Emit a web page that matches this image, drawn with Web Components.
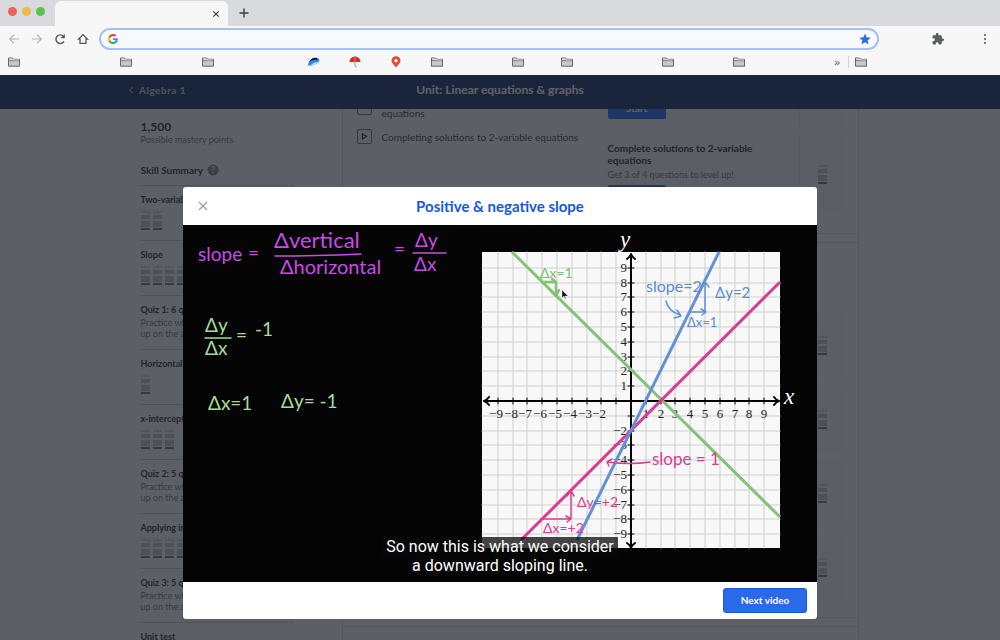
<!DOCTYPE html>
<html lang="en">
<head>
<meta charset="utf-8">
<title>Linear equations &amp; graphs</title>
<style>
html,body{margin:0;height:100%}
body{display:flex;flex-direction:column;overflow:hidden;font-family:Lato,"Noto Sans",sans-serif;color:#21242c;background:#f7f7f7}
</style>
</head>
<body>
<browser-chrome></browser-chrome>
<course-page>
  <course-sidebar slot="side"></course-sidebar>
  <lesson-list slot="main"></lesson-list>
  <video-dialog slot="dialog" heading="Positive &amp; negative slope">
    <slope-board></slope-board>
  </video-dialog>
</course-page>

<script>
const define=(name,html,setup)=>{
  const t=document.createElement('template');t.innerHTML=html;
  customElements.define(name,class extends HTMLElement{
    constructor(){super();this.attachShadow({mode:'open'}).append(t.content.cloneNode(true));}
    connectedCallback(){if(setup&&!this.ready){this.ready=true;setup(this,this.shadowRoot);}}
  });
};

/* ---------- browser window ---------- */
define('folder-icon',`<style>:host{display:block;width:12px;height:10px}svg{display:block}</style>
<svg width="12" height="10" viewBox="0 0 12 10"><path d="M.5 9.2V1h4l1 1.300h6v6.900z" fill="#c9c9c9" stroke="#666" stroke-width="1"/><path d="M1 3.700h10.500" stroke="#666" stroke-width=".8"/><path d="M1 2h3.500l.6.900H11" stroke="#fff" stroke-width=".6" fill="none"/></svg>`);

define('bookmark-link',`<style>:host{display:block;flex:0 1 var(--w,auto)}a{display:flex;align-items:center;height:12px;width:12px}</style><a href="#" aria-label="Bookmark"><slot><folder-icon></folder-icon></slot></a>`,
  (el)=>{el.style.setProperty('--w',el.getAttribute('span')+'px')});

define('browser-chrome',`<style>
:host{display:block;flex:none}
button{border:0;background:none;padding:0;display:flex;align-items:center;justify-content:center}
svg{display:block}
.tabs{display:flex;height:26px;background:#d9dade}
.lights{display:flex;gap:5px;padding:7px 9px 0 8px;box-sizing:border-box;width:55px;height:26px}
.lights i{width:9px;height:9px;border-radius:50%}
.tab{width:173px;margin-top:1px;border-radius:6px 6px 0 0;background:#f7f7f7;display:flex;justify-content:flex-end;align-items:center;padding-right:8px;box-sizing:border-box}
.new{margin-left:11px}
.bar{display:flex;align-items:center;height:26px;padding:0 12px 0 8px}
.nav{display:flex;gap:11px;margin-right:10px}
.nav button{width:12px;height:12px}
.addr{flex:1;display:flex;align-items:center;height:18px;border:2px solid #a3c1f5;border-radius:11px;background:#f8f9fa;padding:0 6px 0 7px}
.addr input{flex:1;min-width:0;border:0;background:none;outline:0;height:16px;font:11px "Liberation Sans",sans-serif}
.ext{margin:0 38px 0 53px}
.marks{display:flex;align-items:center;height:23px;padding:0 0 4px 8px;box-sizing:border-box}
.over{margin-left:auto;display:flex;align-items:center;width:166px;font:11px "Liberation Sans",sans-serif;color:#555;white-space:nowrap}
.over i{width:1px;height:12px;background:#d4d4d4;margin:0 6px 0 8px}
</style>
<div class="tabs"><div class="lights"><i style="background:#e8645a"></i><i style="background:#eeb94a"></i><i style="background:#5cc14e"></i></div>
<div class="tab"><button aria-label="Close tab"><svg width="8" height="8"><path d="M1.300 1.300l5.400 5.400M6.700 1.300L1.300 6.700" stroke="#3c4043" stroke-width="1.200"/></svg></button></div>
<button class="new" aria-label="New tab"><svg width="10" height="10"><path d="M5 .5v9M.5 5h9" stroke="#3c4043" stroke-width="1.400"/></svg></button></div>
<div class="bar"><div class="nav">
<button aria-label="Back"><svg width="12" height="12" fill="none" stroke="#b3b5b8" stroke-width="1.200"><path d="M11 6H2M6 1.700L1.700 6 6 10.300"/></svg></button>
<button aria-label="Forward"><svg width="12" height="12" fill="none" stroke="#b3b5b8" stroke-width="1.200"><path d="M1 6h9M6 1.700L10.300 6 6 10.300"/></svg></button>
<button aria-label="Reload"><svg width="12" height="12" fill="none" stroke="#55585c" stroke-width="1.400"><path d="M10 8.300A4.300 4.300 0 1 1 9.400 3.200"/><path d="M10.800.9v4.300H6.500z" fill="#55585c" stroke="none"/></svg></button>
<button aria-label="Home"><svg width="12" height="12" fill="none" stroke="#55585c" stroke-width="1.300"><path d="M1.500 6.200L6 1.600l4.500 4.600H9v4.200H3V6.200z"/></svg></button>
</div>
<div class="addr"><svg width="10" height="10" viewBox="0 0 48 48"><path fill="#EA4335" d="M24 9.500c3.500 0 6.700 1.200 9.200 3.600l6.900-6.900C35.900 2.400 30.500 0 24 0 14.600 0 6.500 5.400 2.600 13.200l8 6.200C12.400 13.700 17.700 9.500 24 9.500z"/><path fill="#4285F4" d="M47 24.600c0-1.600-.2-3.100-.4-4.600H24v9h12.900c-.6 3-2.200 5.500-4.700 7.200l7.700 6C44.400 38 47 31.800 47 24.600z"/><path fill="#FBBC05" d="M10.500 28.600a14.500 14.500 0 0 1 0-9.200l-8-6.200a24 24 0 0 0 0 21.600z"/><path fill="#34A853" d="M24 48c6.500 0 11.900-2.100 15.900-5.800l-7.700-6c-2.200 1.500-4.900 2.300-8.200 2.300-6.300 0-11.600-4.200-13.500-9.900l-8 6.200C6.500 42.600 14.600 48 24 48z"/></svg>
<input type="text" aria-label="Address"><svg width="12" height="12" viewBox="0 0 12 12"><path d="M6 .6l1.600 3.700 4 .4-3 2.700.9 4L6 9.300l-3.500 2.100.9-4-3-2.700 4-.4z" fill="#2f6fe0"/></svg></div>
<button class="ext" aria-label="Extensions"><svg width="12" height="12" viewBox="1 1 22 22"><path fill="#5a5d61" d="M20.500 11H19V7a2 2 0 0 0-2-2h-4V3.500a2.500 2.500 0 0 0-5 0V5H4a2 2 0 0 0-2 2v3.800h1.500a2.700 2.700 0 0 1 0 5.400H2V20a2 2 0 0 0 2 2h3.800v-1.500a2.700 2.700 0 0 1 5.400 0V22H17a2 2 0 0 0 2-2v-4h1.500a2.500 2.500 0 0 0 0-5z"/></svg></button>
<button aria-label="Menu"><svg width="6" height="12" fill="#5a5d61"><circle cx="3" cy="2" r="1.100"/><circle cx="3" cy="6" r="1.100"/><circle cx="3" cy="10" r="1.100"/></svg></button></div>
<div class="marks">
<bookmark-link span="112"></bookmark-link><bookmark-link span="82"></bookmark-link><bookmark-link span="106"></bookmark-link>
<bookmark-link span="41"><svg width="12" height="10"><path d="M0 8.500C0 4 4 1 8 1c3 0 4 1 3 3-1 3-6 5-11 4.500z" fill="#2f86ee"/><path d="M1 5C3 1 6 0 9 1L9.500 3C6 2.500 4 3 1 5z" fill="#0b1c33"/><path d="M3 8c2-2 4-3 7-3-2 2-4 3.500-7 3z" fill="#fff" opacity=".8"/></svg></bookmark-link>
<bookmark-link span="41"><svg width="12" height="12"><path d="M.5 6A5.500 5.500 0 0 1 11.500 6z" fill="#e02a22"/><path d="M6 0v9.500q0 2 1.700 1.500" stroke="#999" fill="none"/></svg></bookmark-link>
<bookmark-link span="41"><svg width="12" height="12"><path d="M6 11.500C3 8 1.500 6.500 1.500 4.700a4.500 4.500 0 0 1 9 0C10.500 6.500 9 8 6 11.500z" fill="#e04b3c"/><circle cx="6" cy="4.700" r="1.600" fill="#fff"/></svg></bookmark-link>
<bookmark-link span="81"></bookmark-link><bookmark-link span="49"></bookmark-link><bookmark-link span="101"></bookmark-link><bookmark-link span="71"></bookmark-link><bookmark-link span="12"></bookmark-link>
<div class="over"><span>»</span><i></i><bookmark-link span="12"></bookmark-link></div></div>`);

/* ---------- course page ---------- */
define('course-page',`<style>
:host{display:flex;flex-direction:column;flex:1;min-height:0;position:relative;overflow:hidden;background:#f7f8fa}
header{flex:none;display:grid;grid-template-columns:1fr auto 1fr;align-items:center;height:34px;background:#0a2a66;color:#fff;padding-bottom:4px;box-sizing:border-box}
header a{color:inherit;text-decoration:none;display:flex;align-items:center;gap:5px;padding-left:128px;font-size:10px;font-weight:700;letter-spacing:.5px;opacity:.75}
h1{margin:0;font-size:12px;line-height:16px}
.cols{flex:1;min-height:0;display:grid;grid-template-columns:231px minmax(0,516px);justify-content:center;width:100%;max-width:970px;overflow:hidden}
.back{position:absolute;inset:0;background:#21242c;opacity:.72}
</style>
<header><a href="#"><svg width="6" height="8" fill="none" stroke="currentColor"><path d="M5 1L1.500 4 5 7"/></svg>Algebra 1</a><h1>Unit: Linear equations &amp; graphs</h1></header>
<div class="cols"><slot name="side"></slot><slot name="main"></slot></div>
<div class="back"></div><slot name="dialog"></slot>`);

define('mastery-meter',`<style>:host{display:block;width:9px;height:20px}svg{display:block}</style>
<svg width="9" height="20"><path d="M0 3V0l2 2 2.500-2L7 2l2-2v3z" fill="#cfd1d4"/><path d="M0 5h9v4H0zM0 11h9v6H0z" fill="#bfc1c5"/><path d="M0 18h9v2H0z" fill="#6b6f78"/></svg>`);

define('skill-item',`<style>
:host{display:block;box-sizing:border-box;border-top:1px solid #c8cacf;padding-top:7px;height:55px}
:host([note]){height:54px}
h3{margin:0 0 4px;font-size:9px;line-height:13px;font-weight:700}
:host([note]) h3{margin:0 0 1px}
p{margin:0;font-size:9px;line-height:11px;color:#6d7078}
.m{display:flex;gap:3px}
</style><h3></h3><div class="m"></div><p></p>`,(el,r)=>{
  r.querySelector('h3').textContent=el.getAttribute('name');
  r.querySelector('.m').innerHTML='<mastery-meter></mastery-meter>'.repeat(+el.getAttribute('meters')||0);
  r.querySelector('p').textContent=el.getAttribute('note')||'';
});

define('course-sidebar',`<style>
:host{display:block;padding:10px 48px 0 29px;border-right:1px solid #d6d8da;overflow:hidden}
.pts{font-size:12px;line-height:16px;font-weight:700}
.cap{font-size:9px;line-height:10px;color:#6d7078;margin-bottom:17px}
h2{margin:0 0 7px;font-size:10px;line-height:16px;display:flex;align-items:center;gap:4px}
</style>
<div class="pts">1,500</div><div class="cap">Possible mastery points</div>
<h2>Skill Summary <svg width="12" height="12"><circle cx="6" cy="6" r="5.500" fill="#7d8087"/><text x="6" y="9" font-size="9" font-weight="700" text-anchor="middle" fill="#fff">?</text></svg></h2>
<skill-item name="Two-variable" meters="2"></skill-item>
<skill-item name="Slope" meters="4"></skill-item>
<skill-item name="Quiz 1: 6 questions" note="Practice what you’ve learned, and level up on the above skills"></skill-item>
<skill-item name="Horizontal" meters="1"></skill-item>
<skill-item name="x-intercepts" meters="3"></skill-item>
<skill-item name="Quiz 2: 5 questions" note="Practice what you’ve learned, and level up on the above skills"></skill-item>
<skill-item name="Applying intercepts" meters="4"></skill-item>
<skill-item name="Quiz 3: 5 questions" note="Practice what you’ve learned, and level up on the above skills"></skill-item>
<skill-item name="Unit test"></skill-item>`);

define('practice-card',`<style>
:host{display:grid;grid-template-columns:1fr 44px;box-sizing:border-box;height:var(--h,66px);margin-bottom:8px;background:#f1f2f4}
div{padding:7px 8px}
.m{border-left:1px solid #dfe1e4;padding:0 0 0 18px;display:flex;align-items:center}
:host([plain]) mastery-meter{display:none}
</style><div><slot></slot></div><div class="m"><mastery-meter></mastery-meter></div>`);

define('lesson-list',`<style>
:host{display:block;border-right:1px solid #d6d8da;overflow:hidden}
section{display:grid;grid-template-columns:1fr 243px;padding:0 15px 0 14px;border-bottom:1px solid #d6d8da}
.first{margin-top:-9px;height:133px}
.later{margin-top:8px;border-top:1px solid #d6d8da;height:376px;padding-top:69px;box-sizing:border-box}
.last{margin-top:8px;border-top:1px solid #d6d8da;height:80px}
ul{margin:0;padding:0;list-style:none;font-size:10px;line-height:14px}
li{display:flex;gap:10px;align-items:center;color:#3b3e46}
.play{flex:none;width:13px;height:13px;border:1px solid #6b6e76;border-radius:2px;display:flex;align-items:center;justify-content:center}
.cut{height:20px;align-items:flex-end;margin:0 0 9px}
.cut .play{margin-bottom:5px}
h3{margin:0 0 3px;font-size:10px;line-height:12px}
p{margin:0 0 4px;font-size:9px;line-height:12px;color:#6d7078}
button{font:700 10px/16px Lato,sans-serif;color:#fff;background:#1865f2;border:0;border-radius:2px;width:58px;height:20px;padding:0 0 2px;display:block}
</style>
<section class="first"><ul>
<li class="cut"><span class="play"></span><span>equations</span></li>
<li><span class="play"><svg width="7" height="7"><path d="M1.500 1l4 2.500-4 2.500z" fill="none" stroke="#21242c" stroke-width="1.200"/></svg></span>Completing solutions to 2-variable equations</li></ul>
<div><practice-card plain style="--h:27px"><button style="margin-top:-8px">Start</button></practice-card>
<practice-card style="--h:77px"><h3>Complete solutions to 2-variable<br>equations</h3><p>Get 3 of 4 questions to level up!</p><button aria-label="Practice"></button></practice-card></div></section>
<section class="later"><div></div><div><practice-card></practice-card><practice-card></practice-card><practice-card></practice-card><practice-card></practice-card></div></section>
<section class="last"></section>`);

/* ---------- video dialog ---------- */
define('video-dialog',`<style>
:host{display:flex;flex-direction:column;position:absolute;top:112px;left:50%;translate:-50%;width:634px;max-width:96%;height:432px;background:#fff;border-radius:3px;overflow:hidden;color:#21242c}
header,footer{display:grid;align-items:center;flex:none}
header{grid-template-columns:60px 1fr 60px;height:38px}
h2{margin:0;font-size:15px;line-height:20px;text-align:center;color:#1558dc}
header button{border:0;background:none;padding:0;margin-left:15px;width:10px;height:10px;display:flex}
.stage{position:relative;flex:1;min-height:0;background:#050505}
.sub{position:absolute;left:0;right:0;top:312px;display:flex;flex-direction:column;align-items:center;color:#fff;font:16px/19px Roboto,sans-serif}
.sub span{background:rgba(8,8,8,.75);padding:0 4px}
footer{height:37px;justify-content:end;padding-right:10px}
footer button{width:84px;height:25px;border:1px solid #1558dc;border-radius:3px;background:#2a69ea;color:#fff;font:700 10px/14px Lato,sans-serif;padding:0 0 2px}
</style>
<header><button aria-label="Close"><svg width="10" height="10"><path d="M1 1l8 8M9 1L1 9" stroke="#9a9ca2" stroke-width="1.200"/></svg></button><h2></h2></header>
<div class="stage"><slot></slot><div class="sub"><span>So now this is what we consider</span><span>a downward sloping line.</span></div></div>
<footer><button>Next video</button></footer>`,(el,r)=>{r.querySelector('h2').textContent=el.getAttribute('heading')});

define('slope-board',`<style>
:host{display:block}svg{display:block;width:100%;height:auto}
text{font-family:Lato,"Open Sans",sans-serif;font-weight:400}
.tick text{font:13px "Liberation Serif",serif;fill:#222}
.purple{fill:#c94be6}.mint{fill:#a4dc9a}.pink{fill:#d8408f}.blue{fill:#5b8bd0}.green{fill:#7cc06f}
.chalk{font-family:"Liberation Serif",serif;font-style:italic;fill:#fff}
</style>
<svg viewBox="0 0 634 357" fill="none" stroke-linecap="round" stroke-linejoin="round">
<rect x="299" y="27" width="298" height="296" fill="#f8f8f8"/>
<g class="grid" stroke="#cfcfcf"></g>
<path d="M302 176h293M448 31v289" stroke="#000" stroke-width="2"/>
<path d="M306 172q-2 3-5 4 3 1 5 4M591 172q2 3 5 4-3 1-5 4M444 34q3-2 4-5 1 3 4 5M444 318q3 2 4 5 1-3 4-5" stroke="#000" stroke-width="2"/>
<g class="tick" stroke="#000"></g>
<g stroke-width="3" stroke-linecap="butt"><path d="M329 27L597 292" stroke="#84c377"/><path d="M338 315L597 57" stroke="#dc3b90"/><path d="M394 315L536 27" stroke="#6390d6"/></g>
<g font-size="19" class="purple"><text x="15" y="36">slope</text><text x="65" y="35">=</text><text x="91" y="23" font-size="22">Δvertical</text><text x="97" y="49" font-size="20">Δhorizontal</text><text x="211" y="31">=</text><text x="232" y="22">Δy</text><text x="231" y="46">Δx</text></g>
<path d="M92 31q40 0 86-2M230 28h33" stroke="#c94be6" stroke-width="1.500"/>
<g font-size="19" class="mint"><text x="22" y="107">Δy</text><text x="22" y="130">Δx</text><text x="53" y="117">=</text><text x="72" y="111">-1</text><text x="25" y="185">Δx=1</text><text x="98" y="183">Δy= -1</text></g>
<path d="M22 113h26" stroke="#a4dc9a" stroke-width="1.500"/>
<g font-size="14"><text class="green" x="357" y="53">Δx=1</text>
<text class="blue" x="463" y="67" font-size="16">slope=2</text><text class="blue" x="532" y="73" font-size="15">Δy=2</text><text class="blue" x="504" y="102" font-size="13">Δx=1</text>
<text class="pink" x="469" y="240" font-size="17">slope = 1</text><text class="pink" x="394" y="282">Δy=+2</text><text class="pink" x="360" y="308">Δx=+2</text></g>
<path d="M359 57h14l-4-3M373 57v13m-5-4l5 5 3-6" stroke="#84c377" stroke-width="2.500"/>
<path d="M507 87h15m-4-3l5 3-4 3M522 86V58m-3 4l3-5 4 5M483 76q2 10 14 14m-3-5l4 6-7 2" stroke="#6390d6" stroke-width="1.500"/>
<path d="M358 294h29m-4-3l5 3-4 3M388 293v-26m-4 4l4-5 3 5M467 237q-20 3-43 0m5-3l-5 3 2 4" stroke="#d8408f" stroke-width="1.500"/>
<path d="M379 65v8l2-2 1 3h1l-1-3h3z" fill="#111" stroke="#fff" stroke-width=".4"/>
<text class="chalk" x="437" y="22" font-size="23">y</text><text class="chalk" x="601" y="179" font-size="23">x</text>
</svg>`,(el,r)=>{
  const unit=14.8,cx=448,cy=176;let g='',t='';
  const label=(n,x,y,a)=>`<text stroke="none" text-anchor="${a}" x="${x}" y="${y}">${n<0?'−'+-n:n}</text>`;
  for(let i=-9;i<=9;i++){
    if(!i)continue;
    const x=Math.round(cx+i*unit),y=Math.round(cy-i*unit);
    g+=`<path d="M${x} 27v296M299 ${y}h298"/>`;
    t+=`<path d="M${x} 173v6M445 ${y}h6"/>`;
    if(i!==-1){t+=label(i,i<0?x-2:x,193,'middle')+label(i,444,y+4,'end');}
  }
  r.querySelector('.grid').innerHTML=g;r.querySelector('.tick').innerHTML=t;
});
</script>
</body>
</html>
